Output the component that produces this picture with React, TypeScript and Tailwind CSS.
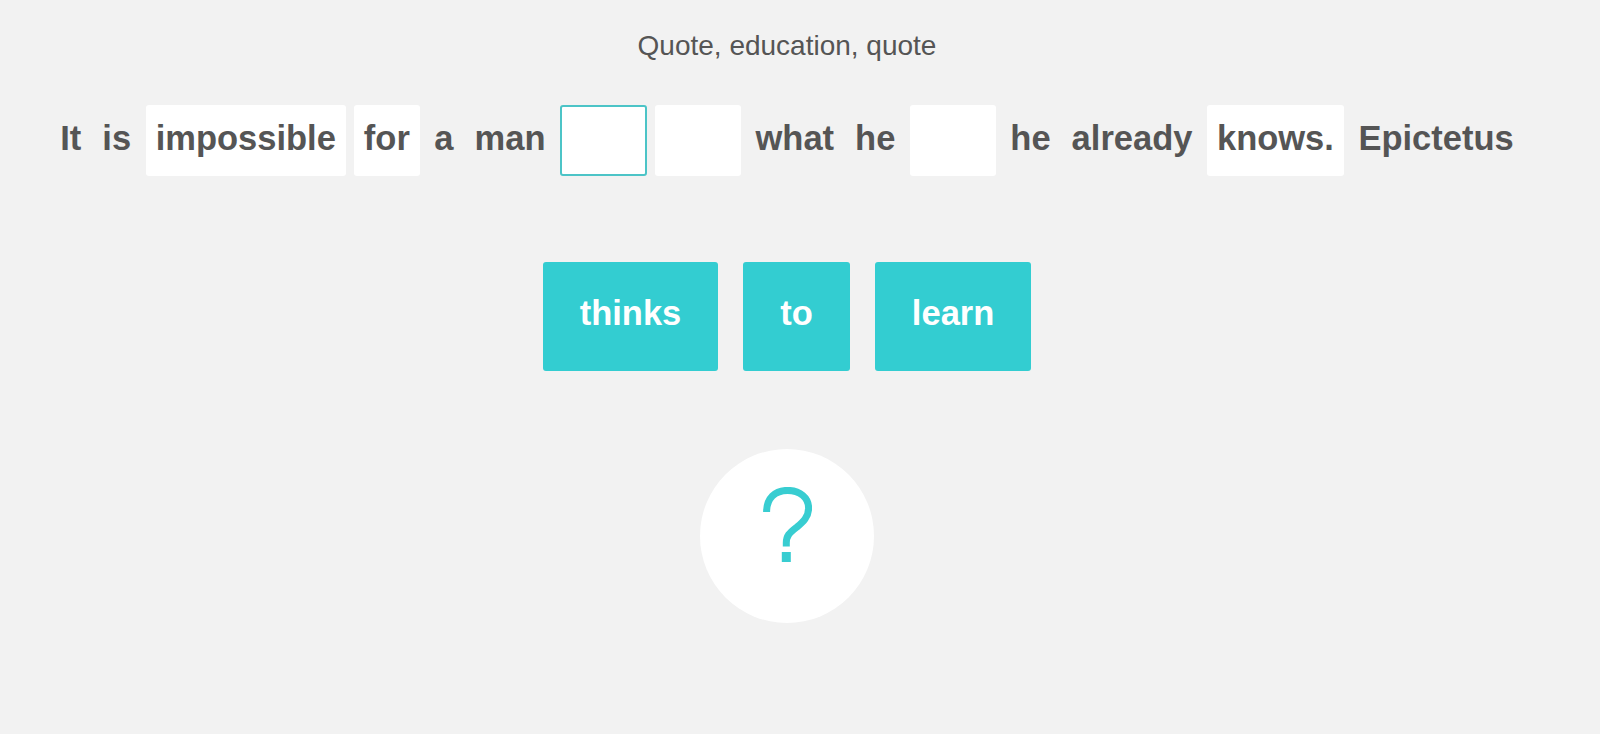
const sentence: { text: string; kind: 'word' | 'tile' | 'blank' | 'active' }[] = [
  { text: 'It', kind: 'word' },
  { text: 'is', kind: 'word' },
  { text: 'impossible', kind: 'tile' },
  { text: 'for', kind: 'tile' },
  { text: 'a', kind: 'word' },
  { text: 'man', kind: 'word' },
  { text: '', kind: 'active' },
  { text: '', kind: 'blank' },
  { text: 'what', kind: 'word' },
  { text: 'he', kind: 'word' },
  { text: '', kind: 'blank' },
  { text: 'he', kind: 'word' },
  { text: 'already', kind: 'word' },
  { text: 'knows.', kind: 'tile' },
  { text: 'Epictetus', kind: 'word' },
];

const choices = ['thinks', 'to', 'learn'];

const Slot = ({ text, kind }: { text: string; kind: string }) => {
  if (kind === 'word') {
    return <span className="flex h-[71px] items-center px-[6.5px] pb-[5px]">{text}</span>;
  }
  if (kind === 'tile') {
    return (
      <span className="flex h-[71px] items-center rounded-[3px] bg-white px-[10px] pb-[5px]">{text}</span>
    );
  }
  if (kind === 'active') {
    return <span className="h-[71px] w-[87px] rounded-[3px] border-2 border-[#4cc4c7] bg-white" />;
  }
  return <span className="h-[71px] w-[86px] rounded-[3px] bg-white" />;
};

const HelpMark = () => (
  <svg width="49" height="75" viewBox="0 0 49 75" fill="none" className="mt-[-23px]">
    <path
      d="M3.6 25C3.6 11 12 3.4 24.5 3.4C37 3.4 45.6 11 45.6 21C45.6 30 40 35 34 40C26 46 23.3 49 23.3 56L23.3 59.5"
      stroke="#38cdd1"
      strokeWidth="7"
    />
    <rect x="18.8" y="65" width="9" height="10" fill="#38cdd1" />
  </svg>
);

export default function App() {
  return (
    <div className="flex min-h-screen flex-col items-center bg-[#f2f2f2] pr-[26px] font-['Liberation_Sans',Arial,sans-serif] text-[#555555]">
      <p className="mt-[30px] text-[28px] leading-[32px]">Quote, education, quote</p>

      <div className="mt-[43px] flex items-center gap-2 text-[34.5px] font-bold leading-none">
        {sentence.map((item, i) => (
          <Slot key={i} text={item.text} kind={item.kind} />
        ))}
      </div>

      <div className="mt-[86px] flex gap-[25px]">
        {choices.map((word) => (
          <button
            key={word}
            type="button"
            className="flex h-[109px] items-center rounded-[3px] bg-[#33cdd1] px-[37px] pb-[6px] text-[34.5px] font-bold leading-none text-white"
          >
            {word}
          </button>
        ))}
      </div>

      <button
        type="button"
        aria-label="Hint"
        className="mt-[78px] flex h-[174px] w-[174px] items-center justify-center rounded-full bg-white"
      >
        <HelpMark />
      </button>
    </div>
  );
}
